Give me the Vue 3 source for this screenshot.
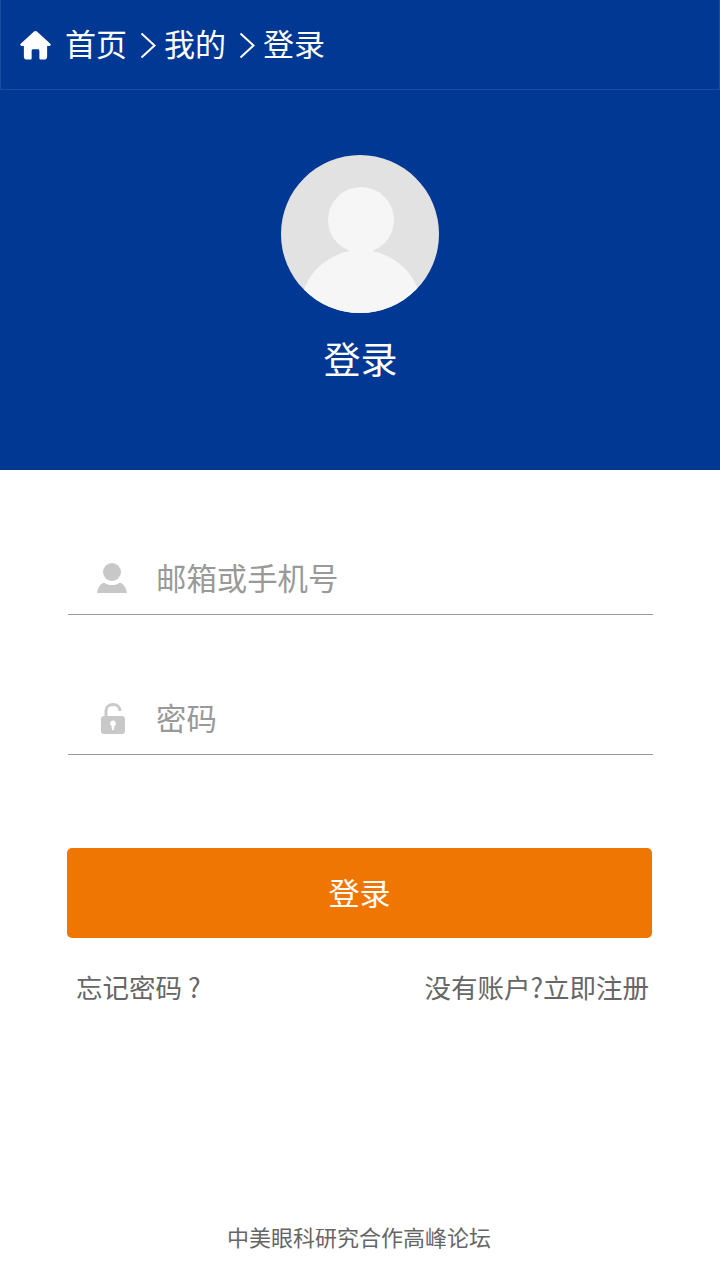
<script setup>
const crumbs = ['首页', '我的', '登录']
</script>

<template>
  <div class="page">
    <header class="topbar">
      <svg class="home" viewBox="0 0 32 30" width="31" height="30" aria-hidden="true">
        <path fill="#fff" d="M16 0.5c.6 0 1.100.2 1.500.6L31.300 13.600c.9.9.3 2.400-1 2.400H28v11c0 1.700-1.300 3-3 3h-4c-.6 0-1-.4-1-1v-8c0-.9-.7-1.600-1.600-1.600h-4.800c-.9 0-1.600.7-1.600 1.600v8c0 .6-.4 1-1 1H7c-1.700 0-3-1.300-3-3V16H1.700c-1.300 0-1.900-1.500-1-2.400L14.500 1.100c.4-.4.9-.6 1.500-.6z"/>
      </svg>
      <template v-for="(c, i) in crumbs" :key="c">
        <span class="crumb">{{ c }}</span>
        <svg v-if="i < crumbs.length - 1" class="chev" viewBox="0 0 16 26" width="16" height="27" aria-hidden="true">
          <path d="M1.500 1l13 12-13 12" fill="none" stroke="#fff" stroke-width="2"/>
        </svg>
      </template>
    </header>

    <section class="hero">
      <div class="avatar">
        <span class="head"></span>
        <span class="body"></span>
      </div>
      <h1 class="title">登录</h1>
    </section>

    <form class="form" @submit.prevent>
      <label class="field">
        <span class="ficon person">
          <svg viewBox="0 0 30 30" width="30" height="30" aria-hidden="true">
            <circle cx="15" cy="9" r="9" fill="#c8c8c8"/>
            <path fill="#c8c8c8" d="M0 30c1-6 3.500-9 7-10.500 2 1.700 4.800 2.600 8 2.600s6-.9 8-2.600c3.500 1.500 6 4.500 7 10.500z"/>
          </svg>
        </span>
        <span class="ph">邮箱或手机号</span>
      </label>
      <label class="field second">
        <span class="ficon lock">
          <svg viewBox="0 0 24 31" width="24" height="31" aria-hidden="true">
            <path fill="none" stroke="#c8c8c8" stroke-width="3" d="M5 14V8C5 4 8 1.500 12 1.500S19 4 19 8"/>
            <path fill="#c8c8c8" fill-rule="evenodd" d="M3 13h18c1.700 0 3 1.300 3 3v12c0 1.700-1.300 3-3 3H3c-1.700 0-3-1.300-3-3V16c0-1.700 1.300-3 3-3zm9 4.500a3 3 0 0 0-1.400 5.600l.4 3.900h2l.4-3.900A3 3 0 0 0 12 17.500z"/>
          </svg>
        </span>
        <span class="ph">密码</span>
      </label>

      <button class="submit" type="button">登录</button>

      <div class="links">
        <a class="link">忘记密码 ?</a>
        <a class="link">没有账户?立即注册</a>
      </div>
    </form>

    <footer class="foot">中美眼科研究合作高峰论坛</footer>
  </div>
</template>

<style>
html, body { margin: 0; background: #fff; }
</style>

<style scoped>
.page {
  width: 720px;
  height: 1280px;
  display: flex;
  flex-direction: column;
  background: #fff;
  font-family: "Noto Sans CJK SC", "Liberation Sans", sans-serif;
  font-weight: 400;
  overflow: hidden;
}
.topbar {
  box-sizing: border-box;
  height: 90px;
  flex: none;
  display: flex;
  align-items: center;
  padding-left: 19px;
  background: #003894;
  border: 1px solid #1a4c9f;
  border-top: none;
  color: #fff;
}
.home { flex: none; margin-right: 14px; }
.crumb { font-size: 31px; line-height: 40px; margin-bottom: 4px; }
.chev { flex: none; margin: 2px 8px 0 13px; }
.hero {
  height: 380px;
  flex: none;
  box-sizing: border-box;
  padding-top: 65px;
  background: #003894;
  display: flex;
  flex-direction: column;
  align-items: center;
}
.avatar {
  position: relative;
  width: 158px;
  height: 158px;
  border-radius: 50%;
  background: #e2e2e2;
  overflow: hidden;
  flex: none;
}
.head {
  position: absolute;
  left: 47px;
  top: 32px;
  width: 66px;
  height: 66px;
  border-radius: 50%;
  background: #f6f6f6;
}
.body {
  position: absolute;
  left: 19px;
  top: 95px;
  width: 122px;
  height: 122px;
  border-radius: 50%;
  background: #f6f6f6;
}
.title {
  margin: 19px 0 0;
  font-size: 37px;
  line-height: 52px;
  font-weight: 400;
  color: #fff;
  padding-left: 1px;
}
.form {
  display: flex;
  flex-direction: column;
  padding: 0 68px 0 67px;
}
.field {
  margin-top: 74px;
  margin-left: 1px;
  margin-right: -1px;
  height: 71px;
  box-sizing: border-box;
  display: flex;
  align-items: center;
  border-bottom: 1px solid #999;
}
.second { margin-top: 69px; }
.ficon {
  width: 88px;
  flex: none;
  display: flex;
  justify-content: center;
  box-sizing: border-box;
}
.person { margin-bottom: 2px; }
.lock { padding-left: 2px; margin-bottom: 2px; }
.ph { font-size: 30.4px; line-height: 40px; color: #999; margin-bottom: 4px; }
.submit {
  margin-top: 93px;
  height: 90px;
  border: none;
  border-radius: 5px;
  background: #ef7603;
  color: #fff;
  font: inherit;
  font-size: 31px;
  padding: 0 0 4px;
}
.links {
  margin-top: 31px;
  display: flex;
  justify-content: space-between;
  padding: 0 3px 0 9px;
}
.link { font-size: 26.5px; line-height: 36px; color: #666; }
.foot {
  margin-top: auto;
  padding: 0 2px 28px 0;
  text-align: center;
  font-size: 22px;
  line-height: 32px;
  color: #666;
}
</style>
